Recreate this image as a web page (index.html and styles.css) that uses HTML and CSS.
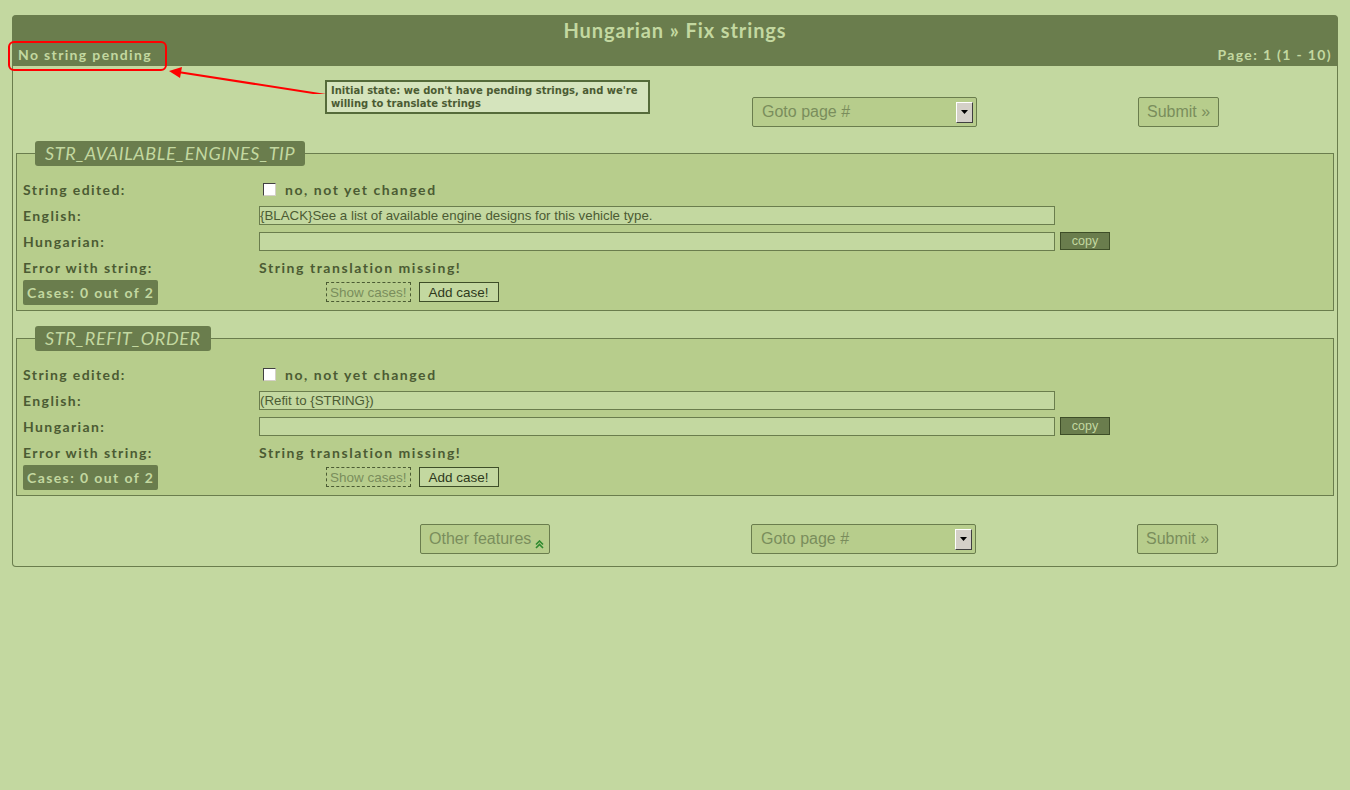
FILE: index.html
```html
<!DOCTYPE html>
<html>
<head>
<meta charset="utf-8">
<title>Hungarian » Fix strings</title>
<link rel="stylesheet" href="styles.css">
</head>
<body>
<div class="page">
  <div class="panel">
    <div class="head">
      <div class="title">Hungarian » Fix strings</div>
      <div class="subline"><span>No string pending</span><span>Page: 1 (1 - 10)</span></div>
    </div>
    <div class="controls">
      <div class="c1"></div>
      <div class="select"><span>Goto page #</span><span class="arrow"><svg width="8" height="5" viewBox="0 0 8 5"><path d="M0 0H7L3.5 4Z" fill="#000"/></svg></span></div>
      <div class="btn">Submit »</div>
    </div>

    <fieldset class="str">
      <legend>STR_AVAILABLE_ENGINES_TIP</legend>
      <div class="grid">
        <div class="lab">String edited:</div>
        <div class="val"><span class="check"></span><span class="bold">no, not yet changed</span></div>
        <div class="lab">English:</div>
        <div class="val"><div class="input">{BLACK}See a list of available engine designs for this vehicle type.</div></div>
        <div class="lab">Hungarian:</div>
        <div class="val"><div class="input"></div><span class="copy">copy</span></div>
        <div class="lab">Error with string:</div>
        <div class="val"><span class="bold">String translation missing!</span></div>
        <div class="lab"><span class="cases">Cases: 0 out of 2</span></div>
        <div class="val"><span class="show">Show cases!</span><span class="add">Add case!</span></div>
      </div>
    </fieldset>

    <fieldset class="str second">
      <legend>STR_REFIT_ORDER</legend>
      <div class="grid">
        <div class="lab">String edited:</div>
        <div class="val"><span class="check"></span><span class="bold">no, not yet changed</span></div>
        <div class="lab">English:</div>
        <div class="val"><div class="input">(Refit to {STRING})</div></div>
        <div class="lab">Hungarian:</div>
        <div class="val"><div class="input"></div><span class="copy">copy</span></div>
        <div class="lab">Error with string:</div>
        <div class="val"><span class="bold">String translation missing!</span></div>
        <div class="lab"><span class="cases">Cases: 0 out of 2</span></div>
        <div class="val"><span class="show">Show cases!</span><span class="add">Add case!</span></div>
      </div>
    </fieldset>

    <div class="controls bottom">
      <div class="c1"><div class="btn other">Other features <svg width="9" height="9" viewBox="0 0 9 9"><path d="M1 4.5L4.5 1L8 4.5M1 8L4.5 4.5L8 8" fill="none" stroke="#2f8a2f" stroke-width="1.6"/></svg></div></div>
      <div class="select"><span>Goto page #</span><span class="arrow"><svg width="8" height="5" viewBox="0 0 8 5"><path d="M0 0H7L3.5 4Z" fill="#000"/></svg></span></div>
      <div class="btn">Submit »</div>
    </div>
  </div>

  <div class="note">Initial state: we don't have pending strings, and we're willing to translate strings</div>
  <svg class="annot" width="340" height="80" viewBox="0 0 340 80">
    <rect x="9" y="28" width="157" height="28" rx="5" fill="none" stroke="#f00" stroke-width="2"/>
    <line x1="326" y1="81" x2="178" y2="58" stroke="#f00" stroke-width="2"/>
    <path d="M169 57L182 53L180 64Z" fill="#f00"/>
  </svg>
</div>
</body>
</html>
```

FILE: styles.css
```css
html, body {
  margin: 0;
  padding: 0;
  background: #c3d8a0;
}
body {
  font-family: Lato, "Open Sans", sans-serif;
  color: #4b5b33;
}
.page {
  position: relative;
  padding: 15px 12px 0 12px;
  width: 1326px;
}
.panel {
  border: 1px solid #6a7d4d;
  border-top: none;
  border-radius: 5px 5px 4px 4px;
  padding-bottom: 12px;
}
.head {
  background: #6a7d4d;
  color: #c3d8a0;
  border-radius: 4px 4px 0 0;
  margin: 0 -1px;
  height: 51px;
}
.title {
  text-align: center;
  font-weight: 700;
  font-size: 20px;
  letter-spacing: 0.9px;
  height: 28px;
  line-height: 30px;
}
.subline {
  display: flex;
  justify-content: space-between;
  padding: 0 6px;
  font-weight: 700;
  font-size: 14px;
  letter-spacing: 1.35px;
  line-height: 23px;
}
.controls {
  display: grid;
  grid-template-columns: 739px 386px auto;
  align-items: start;
  margin-top: 31px;
  height: 30px;
}
.controls.bottom {
  margin-top: 28px;
}
.controls.bottom .select, .controls.bottom .btn { margin-left: -1px; }
.select {
  width: 223px;
  height: 28px;
  border: 1px solid #6a7d4d;
  border-radius: 2px;
  background: #b7cd8c;
  display: flex;
  align-items: center;
  justify-content: space-between;
  box-sizing: content-box;
  font-family: "Liberation Sans", Arial, sans-serif;
  font-size: 16px;
  color: #7a8d5c;
}
.select > span:first-child { padding-left: 9px; }
.arrow {
  width: 15px;
  height: 19px;
  margin-right: 3px;
  background: #d4d0c8;
  border: 1px solid;
  border-color: #fff #404040 #404040 #fff;
  display: flex;
  align-items: center;
  justify-content: center;
}
.btn {
  display: inline-flex;
  align-items: center;
  height: 28px;
  padding: 0 8px;
  border: 1px solid #6a7d4d;
  border-radius: 2px;
  background: #b7cd8c;
  font-family: "Liberation Sans", Arial, sans-serif;
  font-size: 16px;
  color: #7a8d5c;
  width: max-content;
}
.c1 { padding-left: 408px; }
.btn.other { gap: 4px; padding-right: 5px; }
.btn.other svg { margin-top: 10px; }

fieldset.str {
  margin: 14px 3px 0 3px;
  padding: 0 6px 4px 6px;
  border: 1px solid #6a7d4d;
  background: #b7cd8c;
}
fieldset.second { margin-top: 15px; }
legend {
  margin-left: 12px;
  margin-bottom: -5px;
  padding: 0 10px;
  background: #6a7d4d;
  color: #c3d8a0;
  font-style: italic;
  font-size: 18px;
  letter-spacing: 0.6px;
  border-radius: 3px;
  height: 25px;
  line-height: 25px;
}
.grid {
  display: grid;
  grid-template-columns: 236px 1fr;
  grid-auto-rows: 26px;
  margin-top: 15px;
}
.lab, .val {
  display: flex;
  align-items: center;
}
.lab, .bold {
  font-weight: 700;
  font-size: 14px;
  letter-spacing: 1.4px;
  color: #4b5b33;
}
.bold { letter-spacing: 1.55px; }
.check {
  width: 11px;
  height: 11px;
  background: #fff;
  border: 1px solid;
  border-color: #404040 #d4d0c8 #d4d0c8 #404040;
  margin: 0 9px 0 4px;
}
.input {
  width: 794px;
  height: 17px;
  border: 1px solid #6a7d4d;
  background: #c3d8a0;
  font-family: "Liberation Sans", Arial, sans-serif;
  font-size: 13.3px;
  line-height: 17px;
  color: #4b5b33;
  padding: 0;
  white-space: nowrap;
  overflow: hidden;
}
.copy {
  margin-left: 5px;
  width: 48px;
  height: 16px;
  border: 1px solid #3e4e28;
  background: #6a7d4d;
  color: #c3d8a0;
  font-family: "Liberation Sans", Arial, sans-serif;
  font-size: 12.5px;
  display: flex;
  align-items: center;
  justify-content: center;
}
.cases {
  display: inline-flex;
  align-items: center;
  height: 25px;
  padding: 0 4px;
  background: #6a7d4d;
  color: #c3d8a0;
  border-radius: 2px;
  margin-top: -2px;
}
.show, .add {
  display: inline-flex;
  align-items: center;
  height: 18px;
  font-family: "Liberation Sans", Arial, sans-serif;
  font-size: 13.5px;
  margin-top: -2px;
}
.show {
  margin-left: 67px;
  border: 1px dashed #4b5b33;
  padding: 0 3px;
  color: #7a8d5c;
}
.add {
  margin-left: 8px;
  border: 1px solid #3e4e28;
  padding: 0 9px;
  background: #c3d8a0;
  color: #2e3a1c;
}
.note {
  position: absolute;
  left: 325px;
  top: 80px;
  width: 313px;
  height: 28px;
  border: 2px solid #556b3a;
  background: #d5e4bd;
  padding: 2px 4px 0 4px;
  font-family: "DejaVu Sans", sans-serif;
  font-size: 10px;
  font-weight: 700;
  line-height: 13px;
  color: #4b5b33;
}
.annot {
  position: absolute;
  left: 0;
  top: 14px;
}
```
